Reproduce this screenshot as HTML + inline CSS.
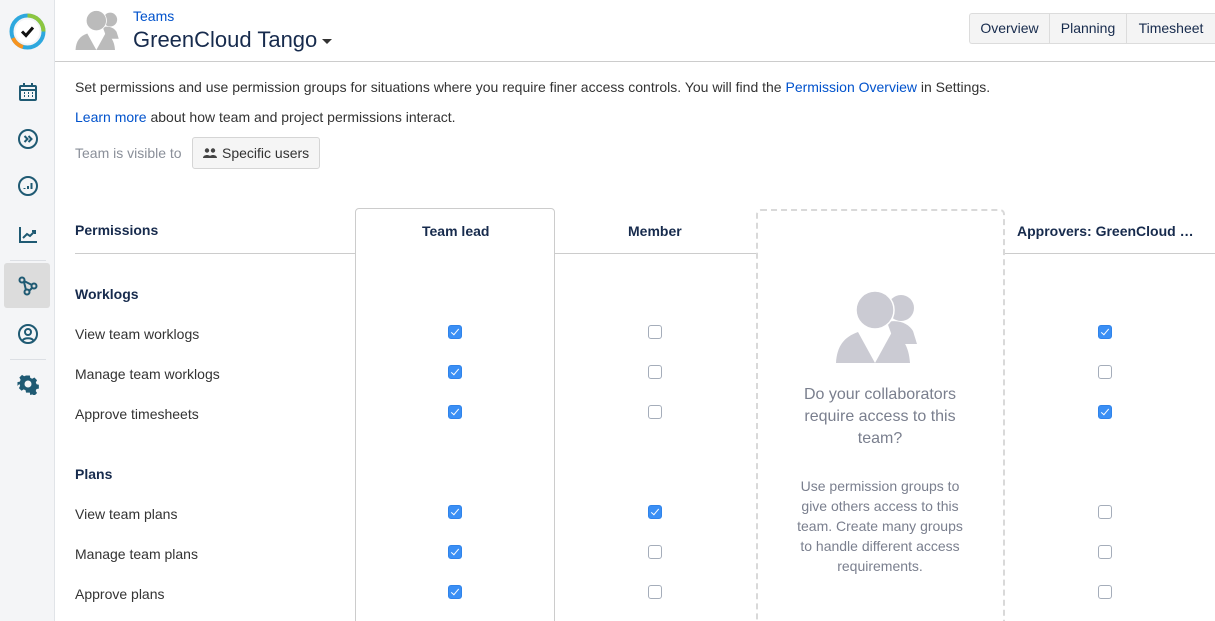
<!DOCTYPE html>
<html><head><meta charset="utf-8"><style>
*{box-sizing:border-box;margin:0;padding:0}
html,body{width:1215px;height:621px;overflow:hidden}
body{background:#fff;font-family:"Liberation Sans",Arial,sans-serif;color:#333;font-size:14px;position:relative}
.abs{position:absolute}
.side{left:0;top:0;width:55px;height:621px;background:#f4f5f7;border-right:1px solid #e1e4e8}
.ico{position:absolute;left:17px;width:22px;height:22px}
a{color:#0052cc;text-decoration:none}
.t{position:absolute;white-space:nowrap}
.cb{position:absolute;width:14px;height:14px;border:1px solid #a5adba;border-radius:3px;background:#fff}
.cb.on{background:#3a8ff5;border-color:#2f83ea}
.cb.on::after{content:"";position:absolute;left:4px;top:1px;width:3px;height:7px;border:solid #fff;border-width:0 1.6px 1.6px 0;transform:rotate(40deg)}
.b{font-weight:bold;color:#172b4d}
</style></head><body>
<div class="abs side">
 <svg class="abs" style="left:9px;top:13px" width="37" height="37" viewBox="0 0 37 37"><circle cx="18.5" cy="18.5" r="16" fill="none" stroke="#2ea8de" stroke-width="4"/><path d="M18.5 2.5 A16 16 0 0 1 34.5 18.5" fill="none" stroke="#8dc63f" stroke-width="4"/><path d="M4 25 A16 16 0 0 0 14 34" fill="none" stroke="#f7931e" stroke-width="4"/><circle cx="18.5" cy="18.5" r="12" fill="#fff"/><path d="M13 18.5l4 4 7-8" fill="none" stroke="#111" stroke-width="3"/></svg>
 <svg class="ico" style="top:81px" viewBox="0 0 22 22" fill="none" stroke="#1f5a73" stroke-width="2"><rect x="3" y="5" width="16" height="14" rx="1"/><path d="M7 2v4M15 2v4M3 9h16"/><path d="M7 12h1M11 12h1M15 12h1M7 15h1M11 15h1M15 15h1" stroke-width="2"/></svg>
 <svg class="ico" style="top:128px" viewBox="0 0 22 22" fill="none" stroke="#1f5a73" stroke-width="2"><circle cx="11" cy="11" r="9"/><path d="M7.5 8l3 3-3 3M11.5 8l3 3-3 3"/></svg>
 <svg class="ico" style="top:175px" viewBox="0 0 22 22" fill="none" stroke="#1f5a73" stroke-width="2"><circle cx="11" cy="11" r="9"/><path d="M7.5 14v-1M11 14v-3M14.5 14v-6"/></svg>
 <svg class="ico" style="top:223px" viewBox="0 0 22 22" fill="none" stroke="#1f5a73" stroke-width="2"><path d="M3 4v15h17"/><path d="M6 15l4-4 3 2 5-5M15 8h3v3"/></svg>
 <div class="abs" style="left:10px;top:260px;width:36px;height:1px;background:#dcdfe4"></div>
 <div class="abs" style="left:4px;top:263px;width:46px;height:45px;background:#dcdcdc;border-radius:3px"></div>
 <svg class="ico" style="top:275px" viewBox="0 0 22 22" fill="none" stroke="#1f5a73" stroke-width="2"><circle cx="5" cy="5" r="2.5"/><circle cx="17" cy="11" r="2.5"/><circle cx="10" cy="17" r="2.5"/><path d="M7 7l2 8M7 6l8 4M12 16l3-3"/></svg>
 <svg class="ico" style="top:323px" viewBox="0 0 22 22" fill="none" stroke="#1f5a73" stroke-width="2"><circle cx="11" cy="11" r="9"/><circle cx="11" cy="9" r="3"/><path d="M5.5 17.5c2-3 9-3 11 0"/></svg>
 <div class="abs" style="left:10px;top:359px;width:36px;height:1px;background:#dcdfe4"></div>
 <svg class="ico" style="top:373px" viewBox="0 0 22 22"><path fill="#1f5a73" d="M9 2h4l.5 2.5 2 1 2.3-1.3 2.8 2.8-1.3 2.3.8 2 2.4.5v4l-2.5.5-.8 2 1.4 2.2-2.8 2.8-2.3-1.4-2 .8L13 20H9l-.5-2.5-2-.8-2.2 1.4-2.8-2.8 1.3-2.3-.8-2L0 13V9l2.5-.5.8-2L2 4.2 4.8 1.4 7 2.8l2-.8z" transform="scale(.95) translate(.5 .6)"/><circle cx="11" cy="11" r="3.5" fill="#f4f5f7"/></svg>
</div>
<svg class="abs" style="left:75px;top:10px" width="48" height="40" viewBox="0 0 90 75" fill="#bbb"><circle cx="66" cy="18" r="13"/><path d="M52 32c12-3 22 2 26 9l4 13H60z"/><circle cx="40" cy="20" r="19" fill="#bbb" stroke="#fff" stroke-width="1.5"/><path d="M1 75c1-17 8-26 22-31l17 31 17-31c10 4 17 14 18 31z"/><path d="M37 46h6l-3 11z" fill="#fff"/></svg>
<a class="t" style="left:133px;top:8px;font-size:14px">Teams</a>
<div class="t" style="left:133px;top:27px;font-size:22px;color:#172b4d">GreenCloud Tango</div>
<div class="abs" style="left:322px;top:39px;border:5px solid transparent;border-top-color:#333;border-bottom:0"></div>
<div class="abs" style="left:969px;top:13px;width:246px;height:31px;border:1px solid #dcdcdc;border-right:0;border-radius:3px 0 0 3px;background:#f4f4f4;display:flex;color:#172b4d">
 <div style="width:80px;border-right:1px solid #dcdcdc;text-align:center;line-height:29px">Overview</div>
 <div style="width:77px;border-right:1px solid #dcdcdc;text-align:center;line-height:29px">Planning</div>
 <div style="width:88px;text-align:center;line-height:29px">Timesheet</div>
</div>
<div class="abs" style="left:55px;top:61px;width:1160px;height:1px;background:#ccc"></div>
<div class="t" style="left:75px;top:79px">Set permissions and use permission groups for situations where you require finer access controls. You will find the <a>Permission Overview</a> in Settings.</div>
<div class="t" style="left:75px;top:109px"><a>Learn more</a> about how team and project permissions interact.</div>
<div class="t" style="left:75px;top:145px;color:#8a8f99">Team is visible to</div>
<div class="abs" style="left:192px;top:137px;width:128px;height:32px;border:1px solid #d5d5d5;border-radius:3px;background:#f5f5f5"></div>
<svg class="abs" style="left:203px;top:148px" width="14" height="10" viewBox="0 0 14 10" fill="#444"><circle cx="4" cy="2.5" r="2.2"/><circle cx="10" cy="2.5" r="2.2"/><path d="M0 10c0-4 8-4 8 0zM6 10c0-4 8-4 8 0z"/></svg>
<div class="t" style="left:222px;top:145px;color:#333">Specific users</div>

<div class="abs" style="left:75px;top:253px;width:1140px;height:1px;background:#ccc"></div>
<div class="abs" style="left:355px;top:208px;width:200px;height:430px;border:1px solid #ccc;border-radius:4px;background:#fff"></div>
<div class="abs" style="left:756px;top:209px;width:249px;height:430px;border:2px dashed #d9d9d9;border-radius:5px;background:#fff"></div>
<div class="t b" style="left:75px;top:222px">Permissions</div>
<div class="t b" style="left:422px;top:223px">Team lead</div>
<div class="t b" style="left:628px;top:223px">Member</div>
<div class="t b" style="left:1017px;top:223px">Approvers: GreenCloud …</div>
<div class="t b" style="left:75px;top:286px">Worklogs</div>
<div class="t b" style="left:75px;top:466px">Plans</div>
<div class="t" style="left:75px;top:326px">View team worklogs</div>
<div class="t" style="left:75px;top:366px">Manage team worklogs</div>
<div class="t" style="left:75px;top:406px">Approve timesheets</div>
<div class="t" style="left:75px;top:506px">View team plans</div>
<div class="t" style="left:75px;top:546px">Manage team plans</div>
<div class="t" style="left:75px;top:586px">Approve plans</div>

<div class="cb on" style="left:448px;top:325px"></div><div class="cb" style="left:648px;top:325px"></div><div class="cb on" style="left:1098px;top:325px"></div>
<div class="cb on" style="left:448px;top:365px"></div><div class="cb" style="left:648px;top:365px"></div><div class="cb" style="left:1098px;top:365px"></div>
<div class="cb on" style="left:448px;top:405px"></div><div class="cb" style="left:648px;top:405px"></div><div class="cb on" style="left:1098px;top:405px"></div>
<div class="cb on" style="left:448px;top:505px"></div><div class="cb on" style="left:648px;top:505px"></div><div class="cb" style="left:1098px;top:505px"></div>
<div class="cb on" style="left:448px;top:545px"></div><div class="cb" style="left:648px;top:545px"></div><div class="cb" style="left:1098px;top:545px"></div>
<div class="cb on" style="left:448px;top:585px"></div><div class="cb" style="left:648px;top:585px"></div><div class="cb" style="left:1098px;top:585px"></div>

<svg class="abs" style="left:835px;top:290px" width="90" height="75" viewBox="0 0 90 75" fill="#cbcbd3"><circle cx="66" cy="18" r="13"/><path d="M52 32c12-3 22 2 26 9l4 13H60z"/><circle cx="40" cy="20" r="19" fill="#cbcbd3" stroke="#fff" stroke-width="1.5"/><path d="M1 73c1-17 8-26 22-31l17 31 17-31c10 4 17 14 18 31z"/><path d="M37 44h6l-3 11z" fill="#fff"/></svg>
<div class="abs" style="left:780px;top:384px;width:200px;text-align:center;font-size:16px;line-height:22px;color:#7a7f8e">Do your collaborators require access to this team?</div>
<div class="abs" style="left:790px;top:476px;width:180px;text-align:center;font-size:14px;line-height:20px;color:#7a7f8e">Use permission groups to give others access to this team. Create many groups to handle different access requirements.</div>
</body></html>
